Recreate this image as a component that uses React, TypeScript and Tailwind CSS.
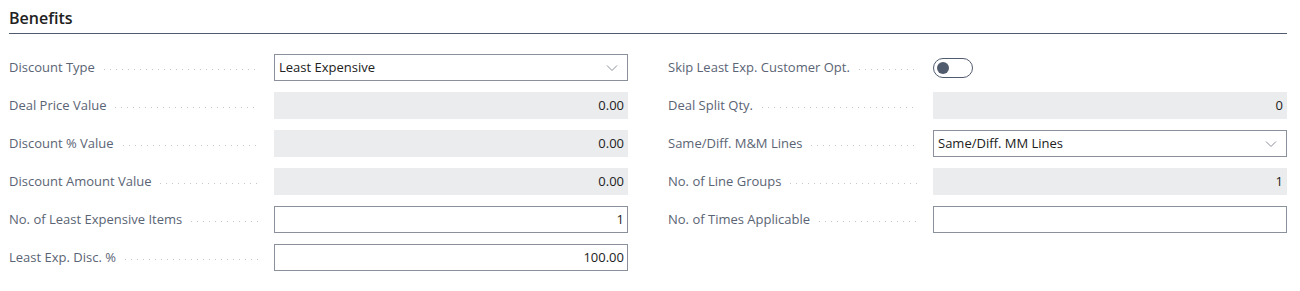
// Benefits fast-tab — two-column field group

const font = { fontFamily: '"Segoe UI", "Open Sans", sans-serif' };

type Field =
  | { label: string; kind: "select"; value: string }
  | { label: string; kind: "readonly"; value: string }
  | { label: string; kind: "input"; value: string }
  | { label: string; kind: "toggle" };

const left: Field[] = [
  { label: "Discount Type", kind: "select", value: "Least Expensive" },
  { label: "Deal Price Value", kind: "readonly", value: "0.00" },
  { label: "Discount % Value", kind: "readonly", value: "0.00" },
  { label: "Discount Amount Value", kind: "readonly", value: "0.00" },
  { label: "No. of Least Expensive Items", kind: "input", value: "1" },
  { label: "Least Exp. Disc. %", kind: "input", value: "100.00" },
];

const right: Field[] = [
  { label: "Skip Least Exp. Customer Opt.", kind: "toggle" },
  { label: "Deal Split Qty.", kind: "readonly", value: "0" },
  { label: "Same/Diff. M&M Lines", kind: "select", value: "Same/Diff. MM Lines" },
  { label: "No. of Line Groups", kind: "readonly", value: "1" },
  { label: "No. of Times Applicable", kind: "input", value: "" },
];

function Chevron() {
  return (
    <svg width="12" height="8" viewBox="0 0 12 8" className="shrink-0">
      <path d="M1 1.5 L6 6.5 L11 1.5" fill="none" stroke="#8a8f99" strokeWidth="1" />
    </svg>
  );
}

function Control({ field }: { field: Field }) {
  if (field.kind === "toggle") {
    return (
      <div className="h-[27px] flex items-center">
        <div className="w-[40px] h-[20px] rounded-full border border-[#505c6d] flex items-center px-[3px]">
          <div className="w-[12px] h-[12px] rounded-full bg-[#505c6d]" />
        </div>
      </div>
    );
  }
  if (field.kind === "readonly") {
    return (
      <div className="h-[27px] bg-[#ebecee] flex items-center justify-end px-[4px] text-[13px] text-[#212121]">
        {field.value}
      </div>
    );
  }
  if (field.kind === "select") {
    return (
      <div className="h-[27px] border border-[#8a919c] bg-white flex items-center justify-between pl-[4px] pr-[9px] text-[13px] text-[#212121]">
        <span>{field.value}</span>
        <Chevron />
      </div>
    );
  }
  return (
    <div className="h-[27px] border border-[#8a919c] bg-white flex items-center justify-end px-[3px] text-[13px] text-[#212121]">
      {field.value}
    </div>
  );
}

function Row({ field }: { field: Field }) {
  return (
    <div className="flex items-center h-[27px] mb-[11px]">
      <div className="w-[265px] flex items-center pr-[16px] text-[13px] text-[#5a6474]">
        <span className="whitespace-nowrap">{field.label}</span>
        <span className="flex-1 ml-[9px] h-px translate-y-[2px] bg-[linear-gradient(to_right,#c4c7cc_1px,transparent_1px)] bg-[length:6px_1px] bg-repeat-x" />
      </div>
      <div className="flex-1">
        <Control field={field} />
      </div>
    </div>
  );
}

export default function App() {
  return (
    <div className="bg-white w-[1300px] h-[291px] pl-[9px] pr-[13px] pt-[6px]" style={font}>
      <div className="text-[16px] font-semibold text-[#212121] pb-[3px] border-b border-[#505c6d]">
        Benefits
      </div>
      <div className="grid grid-cols-2 gap-x-[40px] mt-[20px]">
        <div>
          {left.map((f) => (
            <Row key={f.label} field={f} />
          ))}
        </div>
        <div>
          {right.map((f) => (
            <Row key={f.label} field={f} />
          ))}
        </div>
      </div>
    </div>
  );
}
